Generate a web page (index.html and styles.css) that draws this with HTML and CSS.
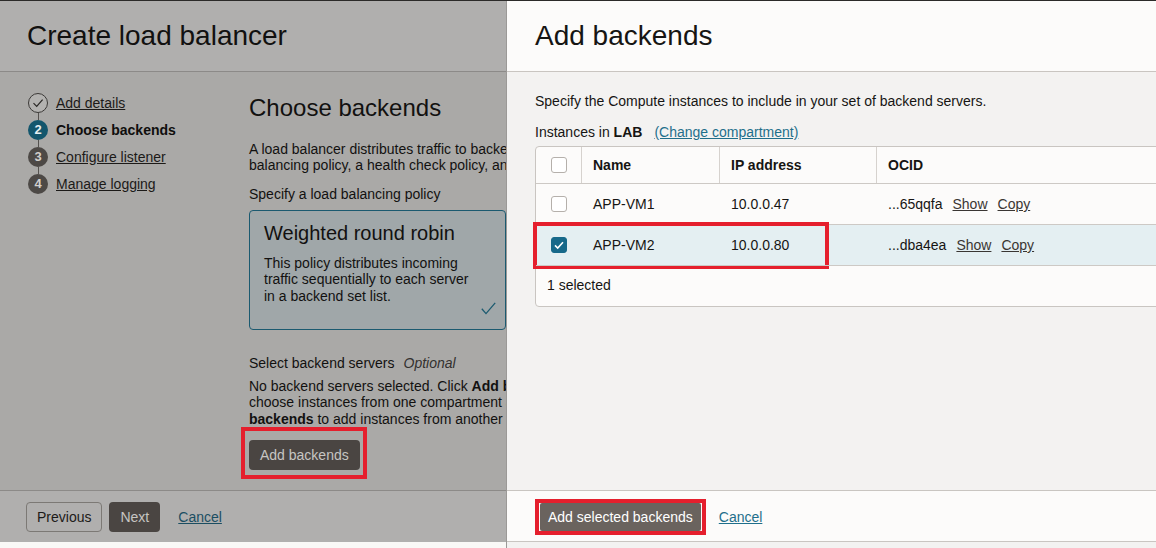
FILE: index.html
```html
<!DOCTYPE html>
<html lang="en">
<head>
<meta charset="utf-8">
<title>Create load balancer</title>
<link rel="stylesheet" href="styles.css">
</head>
<body>
<div class="screen">
  <div class="topline"></div>
  <div class="wizard">
    <header class="wiz-head"><h1>Create load balancer</h1></header>
    <div class="wiz-body">
      <ol class="steps">
        <li class="step">
          <span class="num done"><svg width="20" height="20" viewBox="0 0 20 20"><circle cx="10" cy="10" r="9.5" fill="none" stroke="#3a3836" stroke-width="1"/><polyline points="5.5,10.2 8.7,13.4 14.6,6.6" fill="none" stroke="#2a2826" stroke-width="1.2"/></svg></span>
          <a class="step-link" href="#">Add details</a>
        </li>
        <li class="step">
          <span class="num current">2</span>
          <span class="step-current">Choose backends</span>
        </li>
        <li class="step">
          <span class="num todo">3</span>
          <a class="step-link" href="#">Configure listener</a>
        </li>
        <li class="step">
          <span class="num todo">4</span>
          <a class="step-link" href="#">Manage logging</a>
        </li>
      </ol>
      <section class="content">
        <h2>Choose backends</h2>
        <p class="intro">A load balancer distributes traffic to backend servers in one or more subnets. Choose a load<br>balancing policy, a health check policy, and optional backend servers.</p>
        <p class="label">Specify a load balancing policy</p>
        <div class="policy-card">
          <h3>Weighted round robin</h3>
          <p>This policy distributes incoming traffic sequentially to each server in a backend set list.</p>
          <svg class="card-check" width="15" height="13" viewBox="0 0 15 13"><polyline points="0.8,6.8 5,11.6 14.2,0.8" fill="none" stroke="#1c5b70" stroke-width="1.3"/></svg>
        </div>
        <p class="label servers">Select backend servers<span class="optional">Optional</span></p>
        <p class="none">No backend servers selected. Click <b>Add backends</b> to<br>choose instances from one compartment at a time. Click <b>Add</b><br><b>backends</b> to add instances from another compartment.</p>
        <div class="btn-row"><span class="mark mark-left"><button class="btn dark">Add backends</button></span></div>
      </section>
    </div>
    <footer class="wiz-foot">
      <button class="btn outline">Previous</button>
      <button class="btn dark">Next</button>
      <a class="cancel-left" href="#">Cancel</a>
    </footer>
    <div class="wiz-strip"></div>
  </div>

  <aside class="drawer">
    <header class="d-head"><h1>Add backends</h1></header>
    <div class="d-body">
      <p>Specify the Compute instances to include in your set of backend servers.</p>
      <p class="inst">Instances in <b>LAB</b><a class="compartment" href="#">(Change compartment)</a></p>
      <div class="tbl">
        <div class="tr th">
          <div class="td chk"><span class="box"></span></div>
          <div class="td">Name</div>
          <div class="td">IP address</div>
          <div class="td last">OCID</div>
        </div>
        <div class="tr">
          <div class="td chk"><span class="box"></span></div>
          <div class="td">APP-VM1</div>
          <div class="td">10.0.0.47</div>
          <div class="td ocid">...65qqfa<a href="#">Show</a><a href="#">Copy</a></div>
        </div>
        <div class="tr sel">
          <div class="td chk"><span class="box on"><svg width="16" height="16" viewBox="0 0 16 16"><polyline points="4,8.4 6.7,11 12,5.2" fill="none" stroke="#ffffff" stroke-width="1.6"/></svg></span></div>
          <div class="td">APP-VM2</div>
          <div class="td">10.0.0.80</div>
          <div class="td ocid">...dba4ea<a href="#">Show</a><a href="#">Copy</a></div>
        </div>
        <div class="tr tf">
          <div class="td count">1 selected</div>
        </div>
      </div>
    </div>
    <footer class="d-foot">
      <span class="mark mark-right"><button class="btn medium">Add selected backends</button></span>
      <a class="cancel-right" href="#">Cancel</a>
    </footer>
  </aside>
</div>
</body>
</html>
```

FILE: styles.css
```css
*, *::before, *::after { box-sizing: border-box; margin: 0; padding: 0; }
html, body { width: 1156px; height: 548px; overflow: hidden; }
body {
  font-family: "Liberation Sans", Arial, sans-serif;
  font-size: 14px;
  line-height: 16px;
  color: #161513;
  background: #aaa9a7;
}
.screen { position: relative; width: 1156px; height: 548px; overflow: hidden; display: flex; flex-direction: column; }
.topline { height: 1px; flex: none; background: #2b2a29; }

/* ---------- wizard (dimmed background) ---------- */
.wizard { flex: 1; display: flex; flex-direction: column; color: #121110; }
.wiz-head {
  height: 71px; flex: none;
  background: #b0afae;
  border-bottom: 1px solid #8c8a88;
  display: flex; align-items: center;
  padding-left: 27px;
}
.wiz-head h1 { font-size: 28px; line-height: 32px; font-weight: normal; color: #121110; }
.wiz-body { height: 418px; flex: none; display: flex; padding: 21px 0 0 28px; background: #aaa9a7; overflow: hidden; }

.steps { list-style: none; width: 221px; flex: none; display: flex; flex-direction: column; gap: 7px; }
.step { position: relative; display: flex; align-items: center; gap: 8px; height: 20px; }
.step + .step::before {
  content: ""; position: absolute; left: 10px; top: -7px; height: 7px;
  border-left: 1px solid #55524f;
}
.num {
  width: 20px; height: 20px; border-radius: 50%; flex: none;
  display: flex; align-items: center; justify-content: center;
  font-size: 13px; font-weight: bold; color: #d2cfcb;
}
.num.done { background: #b3b2b0; }
.num.current { background: #13566d; color: #e6eef0; }
.num.todo { background: #4d4946; }
.step-link { color: #1c1a18; text-decoration: underline; }
.step-current { font-weight: bold; color: #0f0e0d; }

.content { width: 720px; flex: none; }
.content h2 { font-size: 24px; line-height: 28px; font-weight: normal; margin-top: 1px; color: #121110; }
.intro { margin-top: 19px; white-space: nowrap; }
.label { margin-top: 13px; }
.policy-card {
  position: relative;
  margin-top: 8px;
  width: 257px; height: 120px;
  border: 1px solid #1b5a70;
  border-radius: 4px;
  background: #a0a7a9;
  padding: 10px 14px;
}
.policy-card h3 { font-size: 20px; line-height: 24px; font-weight: normal; color: #121110; }
.policy-card p { margin-top: 10px; width: 212px; line-height: 16.3px; }
.card-check { position: absolute; right: 9px; bottom: 14px; }
.label.servers { margin-top: 25px; }
.optional { margin-left: 9px; font-style: italic; color: #33312f; }
.none { margin-top: 7px; white-space: nowrap; line-height: 16.3px; }
.btn-row { margin-top: 13px; display: flex; }

.btn {
  font-family: "Liberation Sans", Arial, sans-serif;
  font-size: 14px; height: 30px; border-radius: 4px; cursor: pointer;
}
.btn.dark { background: #4a4542; color: #c7c5c2; border: none; padding: 0 11px; }
.btn.outline { background: transparent; color: #1c1a18; border: 1px solid #7c7975; padding: 0 10px; }
.btn.medium { height: 28px; background: #6a635e; color: #ffffff; border: none; border-radius: 2px; padding: 0 8px; }

.mark { position: relative; display: inline-flex; }
.mark::after { content: ""; position: absolute; border: 4px solid #e51f2d; pointer-events: none; }
.mark-left::after { left: -8px; right: -7px; top: -13px; bottom: -9px; }
.mark-right::after { left: -5px; right: -5px; top: -4px; bottom: -4px; }

.wiz-foot {
  height: 52px; flex: none;
  background: #b0afae;
  border-top: 1px solid #8c8a88;
  display: flex; align-items: center; gap: 7px;
  padding: 1px 0 0 26px;
}
.cancel-left { margin-left: 11px; color: #1b4e62; text-decoration: underline; }
.wiz-strip { height: 6px; flex: none; background: #f9f8f6; }

/* ---------- drawer ---------- */
.drawer {
  position: absolute; top: 1px; left: 506px; width: 650px; bottom: 0;
  border-left: 1px solid #9b9997;
  background: #f3f2f1;
  display: flex; flex-direction: column;
  overflow: hidden;
}
.d-head {
  height: 71px; flex: none;
  background: #fcfbfa;
  border-bottom: 1px solid #c9c5c1;
  display: flex; align-items: center;
  padding-left: 28px;
}
.d-head h1 { font-size: 28px; line-height: 32px; font-weight: normal; color: #161513; }
.d-body { height: 418px; flex: none; padding: 21px 0 0 28px; }
.inst { margin-top: 15px; }
.compartment { margin-left: 12px; color: #1f6f8b; text-decoration: underline; }

.tbl {
  margin-top: 6px;
  width: 660px;
  border: 1px solid #c9c5c1;
  border-radius: 4px;
  background: #fcfbfa;
}
.tr {
  position: relative;
  display: grid;
  grid-template-columns: 46px 138px 157px 1fr;
  height: 41px;
  border-top: 1px solid #cdc9c5;
  align-items: stretch;
}
.tr.th { height: 36px; border-top: none; font-weight: bold; }
.td { display: flex; align-items: center; padding-left: 11px; white-space: nowrap; }
.th .td { border-right: 1px solid #d6d2ce; }
.th .td.last { border-right: none; }
.td.chk { padding-left: 0; justify-content: center; }
.tr.sel { background: #e4eff2; }
.tr.sel::after {
  content: ""; position: absolute; left: -3px; top: -3px; width: 296px; height: 47px;
  border: 4px solid #e51f2d; pointer-events: none;
}
.tr.tf { display: flex; align-items: center; padding-bottom: 3px; }
.ocid a { margin-left: 10px; color: #3a3633; text-decoration: underline; }
.box {
  width: 16px; height: 16px; border: 1px solid #b5b0ab; border-radius: 3px; background: #ffffff;
  display: flex; align-items: center; justify-content: center;
}
.box.on { background: #17698a; border-color: #17698a; }
.box svg { flex: none; }

.d-foot {
  height: 52px; flex: none;
  background: #fcfbfa;
  border-top: 1px solid #c9c5c1;
  border-bottom: 1px solid #c9c5c1;
  display: flex; align-items: center; gap: 18px;
  padding: 1px 0 0 33px;
}
.cancel-right { color: #1f6f8b; text-decoration: underline; }
```
